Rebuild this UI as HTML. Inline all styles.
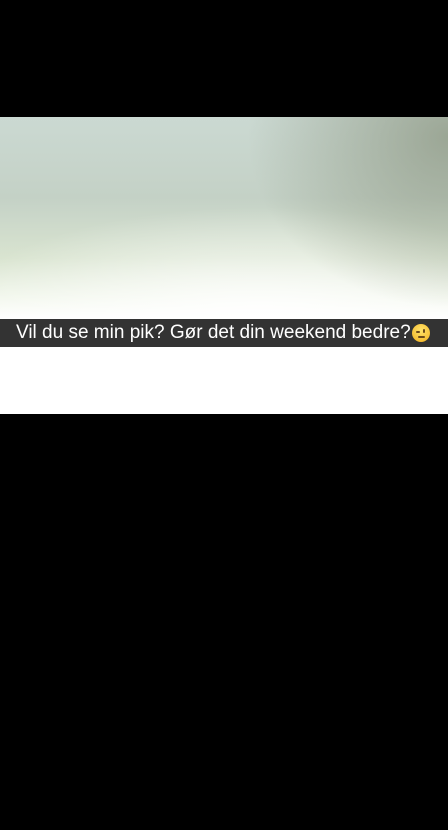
<!DOCTYPE html>
<html><head><style>
body{margin:0;width:448px;height:830px;background:#000;position:relative;overflow:hidden;font-family:"Liberation Sans",sans-serif}
#img{position:absolute;left:0;top:117px;width:448px;height:297px;background:#fff;overflow:hidden}
#photo{position:absolute;left:0;top:0;width:448px;height:202px;
background:
radial-gradient(ellipse 200px 170px at 448px 20px,rgba(140,150,130,.75),rgba(140,150,130,0)),
radial-gradient(ellipse 320px 120px at 260px 210px,#fff 0%,rgba(255,255,255,0) 100%),
linear-gradient(180deg,#cbd9d2 0%,#c4d1c6 40%,#d9e4d0 70%,#f2f7ec 90%,#fff 100%);}
#cap{position:absolute;left:0;top:202px;width:448px;height:28px;background:#333;color:#fff;font-size:19px;line-height:28px;white-space:nowrap}
#cap span{position:absolute;left:16px;top:0}
#emo{position:absolute;left:412px;top:5px;width:18px;height:18px;border-radius:50%;background:radial-gradient(circle at 50% 35%,#ffe36a,#f2b01e)}
#emo i{position:absolute;background:#6b4a1a;border-radius:2px}
</style></head><body>
<div id="img"><div id="photo"></div>
<div id="cap"><span>Vil du se min pik? Gør det din weekend bedre?</span><div id="emo"><i style="left:4px;top:7px;width:4px;height:1.5px"></i><i style="left:11px;top:5px;width:2px;height:4px"></i><i style="left:6px;top:12px;width:7px;height:1.5px"></i></div></div>
</div>
</body></html>
